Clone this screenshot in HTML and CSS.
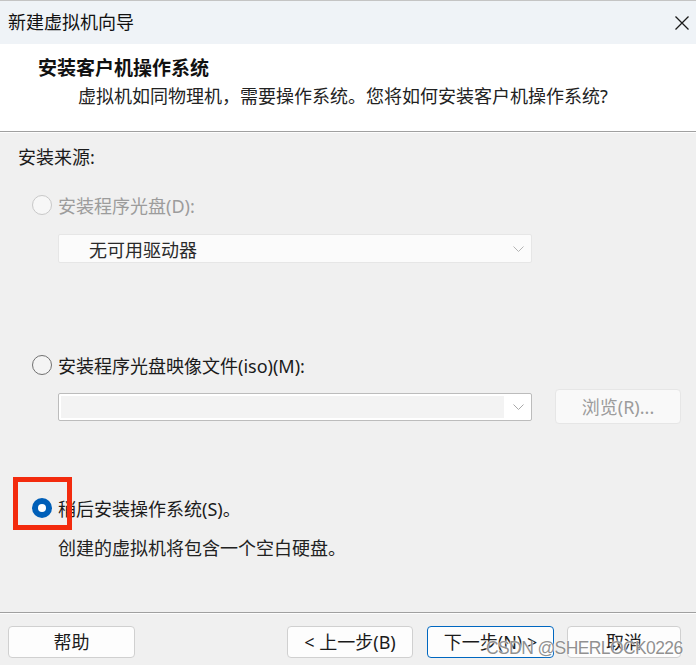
FILE: index.html
```html
<!DOCTYPE html>
<html lang="zh-CN">

<head>
  <meta charset="UTF-8">
  <title>新建虚拟机向导</title>
  <link rel="stylesheet" href="styles.css">
</head>

<body>
  <div class="window">
    <div class="titlebar">
      <span class="title-text">新建虚拟机向导</span>
      <svg class="close-icon" width="14" height="14" viewBox="0 0 14 14">
        <path d="M0.5 0.5 L13.5 13.5 M13.5 0.5 L0.5 13.5" stroke="#1a1a1a" stroke-width="1.3" fill="none" />
      </svg>
    </div>

    <div class="header">
      <div class="header-title">安装客户机操作系统</div>
      <div class="header-sub">虚拟机如同物理机，需要操作系统。您将如何安装客户机操作系统?</div>
    </div>

    <div class="content">
      <div class="section-label">安装来源:</div>

      <!-- installer disc -->
      <div class="radio-row disabled">
        <span class="radio"></span>
        <span class="radio-label">安装程序光盘(D):</span>
      </div>
      <div class="select select-disabled">
        <span class="select-text">无可用驱动器</span>
        <svg class="chevron" width="11" height="6" viewBox="0 0 11 6">
          <path d="M0.5 0.5 L5.5 5.5 L10.5 0.5" stroke="#b4b4b4" stroke-width="1" fill="none" />
        </svg>
      </div>

      <!-- iso image -->
      <div class="radio-row iso-row">
        <span class="radio"></span>
        <span class="radio-label">安装程序光盘映像文件(iso)(M):</span>
      </div>
      <div class="iso-line">
        <div class="select select-iso">
          <span class="select-field"></span>
          <svg class="chevron" width="11" height="6" viewBox="0 0 11 6">
            <path d="M0.5 0.5 L5.5 5.5 L10.5 0.5" stroke="#a8a8a8" stroke-width="1" fill="none" />
          </svg>
        </div>
        <button class="btn btn-browse">浏览(R)...</button>
      </div>

      <!-- install later -->
      <div class="radio-row later-row">
        <span class="radio checked"></span>
        <span class="radio-label">稍后安装操作系统(S)。</span>
        <span class="highlight-box"></span>
      </div>
      <div class="later-desc">创建的虚拟机将包含一个空白硬盘。</div>
    </div>

    <div class="footer">
      <button class="btn btn-help">帮助</button>
      <div class="nav-buttons">
        <button class="btn btn-prev">&lt; 上一步(B)</button>
        <button class="btn btn-next">下一步(N) &gt;</button>
        <button class="btn btn-cancel">取消</button>
      </div>
    </div>

    <div class="watermark">CSDN @SHERLOCK0226</div>
  </div>
</body>

</html>
```

FILE: styles.css
```css
body {
  margin: 0;
  padding: 0;
  font-family: "Noto Sans", "Noto Sans CJK SC", sans-serif;
  font-size: 18px;
  color: #1b1b1b;
  background: #f0f0f0;
}

.window {
  position: relative;
  width: 696px;
  height: 665px;
  display: flex;
  flex-direction: column;
  overflow: hidden;
  background: #f0f0f0;
}

.titlebar {
  height: 44px;
  box-sizing: border-box;
  border-top: 1px solid #c4c4c4;
  background: #eff3f7;
  display: flex;
  align-items: center;
  justify-content: space-between;
  padding: 0 7px 0 8px;
}

.title-text {
  line-height: 43px;
  font-size: 18px;
  color: #111;
}

.header {
  height: 88px;
  box-sizing: border-box;
  background: #fff;
  border-bottom: 1px solid #a0a0a0;
  padding-top: 12px;
}

.header-title {
  padding-left: 38px;
  font-size: 19px;
  font-weight: bold;
  line-height: 24px;
  color: #111;
}

.header-sub {
  padding-left: 78px;
  margin-top: 4px;
  line-height: 24px;
  color: #222;
}

.content {
  flex: 1;
  padding-top: 13px;
  box-shadow: inset 0 1px #fdfdfd;
}

.section-label {
  padding-left: 18px;
  line-height: 24px;
}

.radio-row {
  position: relative;
  display: flex;
  align-items: center;
  gap: 6px;
  height: 24px;
  padding-left: 32px;
  margin-top: 24px;
}

.radio {
  width: 20px;
  height: 20px;
  box-sizing: border-box;
  border-radius: 50%;
  border: 1px solid #707070;
  background: #f4f4f4;
  display: flex;
  align-items: center;
  justify-content: center;
}

.disabled .radio {
  border-color: #c8c8c8;
  background: #f7f7f7;
}

.disabled .radio-label {
  color: #9c9c9c;
}

.radio.checked {
  border: none;
  background: #005fb8;
}

.radio.checked::after {
  content: "";
  width: 8px;
  height: 8px;
  border-radius: 50%;
  background: #fff;
}

.select {
  display: flex;
  align-items: center;
  justify-content: space-between;
  box-sizing: border-box;
  width: 474px;
  margin-left: 58px;
  padding-right: 7px;
}

.select-disabled {
  height: 29px;
  margin-top: 17px;
  background: #fbfbfb;
  border: 1px solid #e6e6e6;
  border-radius: 2px;
  padding-left: 30px;
}

.select-text {
  color: #2a2a2a;
}

.iso-row {
  margin-top: 90px;
}

.iso-line {
  display: flex;
  align-items: center;
  gap: 23px;
  margin-top: 12px;
}

.select-iso {
  height: 28px;
  background: #fff;
  border: 1px solid #bcbcbc;
  border-radius: 2px;
  padding-left: 2px;
}

.select-field {
  width: 443px;
  height: 22px;
  background: #f3f3f3;
}

.btn {
  font-family: "Noto Sans", "Noto Sans CJK SC", sans-serif;
  font-size: 18px;
  height: 32px;
  box-sizing: border-box;
  padding: 0;
  background: #fdfdfd;
  border: 1px solid #d0d0d0;
  border-radius: 4px;
  color: #1b1b1b;
  line-height: 28px;
}

.btn-browse {
  width: 126px;
  height: 35px;
  background: #f9f9f9;
  border-color: #e6e6e6;
  color: #9c9c9c;
}

.later-row {
  margin-top: 72px;
}

.highlight-box {
  position: absolute;
  left: 13px;
  top: -19px;
  width: 59px;
  height: 53px;
  box-sizing: border-box;
  border: 5px solid #f32b0e;
}

.later-desc {
  padding-left: 58px;
  margin-top: 16px;
  line-height: 24px;
  color: #222;
}

.footer {
  height: 53px;
  box-sizing: border-box;
  border-top: 1px solid #a0a0a0;
  box-shadow: inset 0 1px #fdfdfd;
  padding: 13px 15px 0 8px;
  display: flex;
  justify-content: space-between;
  align-items: flex-start;
}

.btn-help {
  width: 127px;
}

.nav-buttons {
  display: flex;
  gap: 13px;
}

.btn-prev {
  width: 126px;
  margin-right: 1px;
}

.btn-next {
  width: 127px;
  border-color: #0067c0;
}

.btn-cancel {
  width: 114px;
}

.watermark {
  position: absolute;
  left: 486px;
  top: 638px;
  white-space: nowrap;
  font-family: "Liberation Sans", sans-serif;
  font-size: 17.5px;
  line-height: 20px;
  letter-spacing: -0.6px;
  color: rgba(115, 115, 115, 0.8);
  text-shadow: 0 0 2px #fff, 0 0 1px #fff;
}
```
